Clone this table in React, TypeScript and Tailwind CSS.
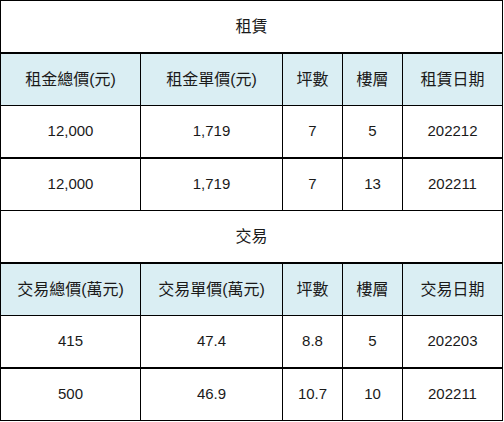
const font = { fontFamily: '"Liberation Sans", "Noto Sans CJK TC", sans-serif' };

type Section = {
  title: string;
  headers: string[];
  rows: string[][];
};

const sections: Section[] = [
  {
    title: '租賃',
    headers: ['租金總價(元)', '租金單價(元)', '坪數', '樓層', '租賃日期'],
    rows: [
      ['12,000', '1,719', '7', '5', '202212'],
      ['12,000', '1,719', '7', '13', '202211'],
    ],
  },
  {
    title: '交易',
    headers: ['交易總價(萬元)', '交易單價(萬元)', '坪數', '樓層', '交易日期'],
    rows: [
      ['415', '47.4', '8.8', '5', '202203'],
      ['500', '46.9', '10.7', '10', '202211'],
    ],
  },
];

const cols = 'grid grid-cols-[140px_142px_60px_60px_100px]';

function SectionTable({ section }: { section: Section }) {
  return (
    <>
      <div className="h-[53px] flex items-center justify-center border-r border-b-2 border-black text-[16px] text-[#1a1a1a]">
        {section.title}
      </div>
      <div className={cols}>
        {section.headers.map((h) => (
          <div
            key={h}
            className="h-[52px] flex items-center justify-center bg-[#daeef3] border-r border-b border-black text-[16px] text-[#1a1a1a] whitespace-nowrap"
          >
            {h}
          </div>
        ))}
      </div>
      {section.rows.map((row, i) => (
        <div key={i} className={cols}>
          {row.map((v, j) => (
            <div
              key={j}
              className={`flex items-center justify-center border-r border-black text-[15px] text-[#1a1a1a] ${
                i === 0 ? 'h-[53px] border-b-2' : 'h-[52px] border-b'
              }`}
            >
              {v}
            </div>
          ))}
        </div>
      ))}
    </>
  );
}

export default function App() {
  return (
    <div className="w-[504px] h-[422px] bg-white" style={font}>
      <div className="w-[503px] border-l border-t border-black">
        {sections.map((s) => (
          <SectionTable key={s.title} section={s} />
        ))}
      </div>
    </div>
  );
}
